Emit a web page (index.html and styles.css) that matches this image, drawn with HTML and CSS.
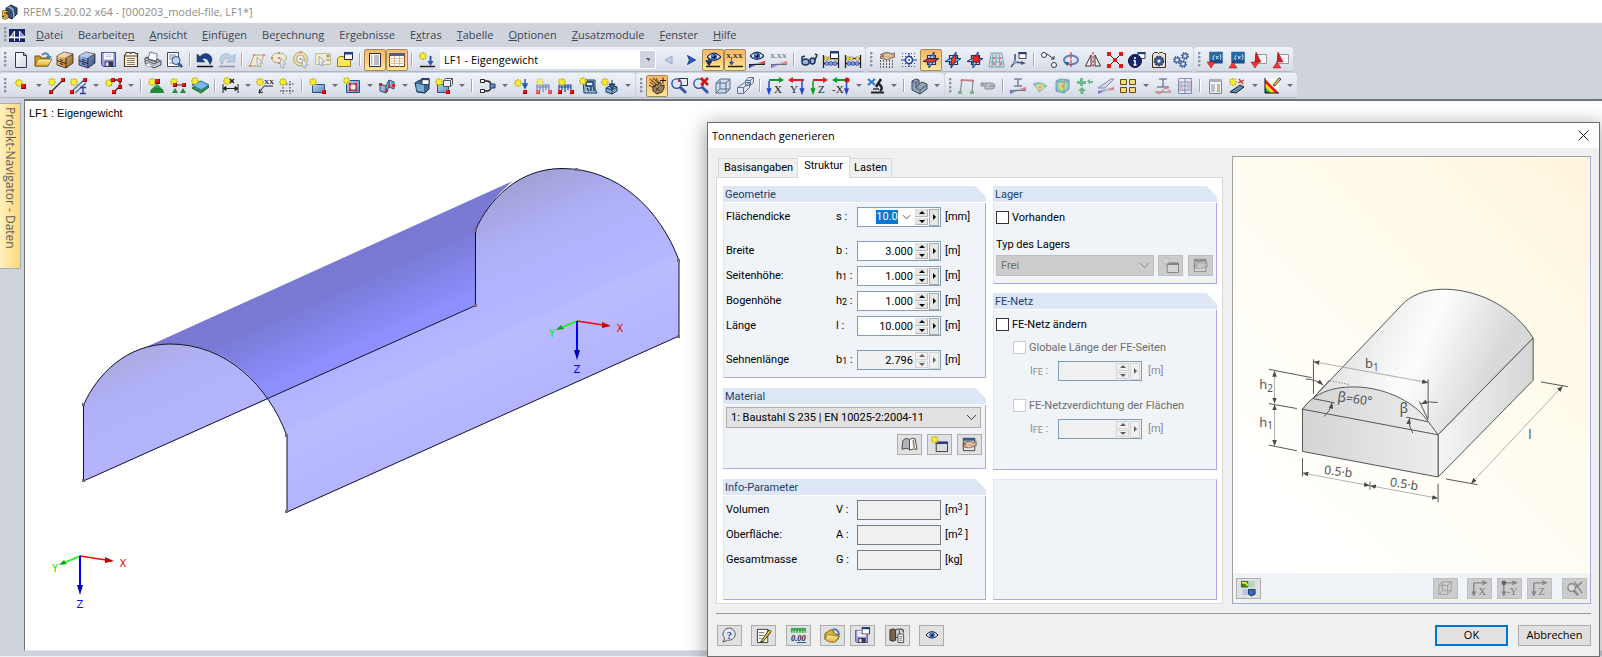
FILE: index.html
```html
<!DOCTYPE html>
<html lang="de">
<head>
<meta charset="utf-8">
<title>RFEM 5.20.02 x64 - [000203_model-file, LF1*]</title>
<link rel="stylesheet" href="styles.css">
</head>
<body>
<svg class="defs" aria-hidden="true">
  <defs>
    <linearGradient id="gBlue" x2="1" y2="1"><stop stop-color="#b9d3ee"/><stop offset="1" stop-color="#5c8cc0"/></linearGradient>
    <linearGradient id="gGold" x2="0" y2="1"><stop stop-color="#fff3a0"/><stop offset="1" stop-color="#e0ae2c"/></linearGradient>
    <linearGradient id="gWood" x2="1" y2="1"><stop stop-color="#f4c884"/><stop offset="1" stop-color="#b87828"/></linearGradient>
    <linearGradient id="gNavy" x2="1" y2="1"><stop stop-color="#9cbcf4"/><stop offset="1" stop-color="#3a64b8"/></linearGradient>
    <linearGradient id="gPaper" x2="1" y2="1"><stop stop-color="#fff"/><stop offset="1" stop-color="#d4d8e2"/></linearGradient>
    <linearGradient id="gGreen" x2="0" y2="1"><stop stop-color="#6fdc74"/><stop offset="1" stop-color="#14782a"/></linearGradient>
    <radialGradient id="gRain"><stop stop-color="#f33"/><stop offset=".35" stop-color="#fc3"/><stop offset=".65" stop-color="#5d5"/><stop offset="1" stop-color="#58c"/></radialGradient>
    <linearGradient id="gRB" x2="1" y2="0"><stop stop-color="#22c"/><stop offset=".5" stop-color="#aac"/><stop offset="1" stop-color="#e22"/></linearGradient>
  </defs>
  <symbol id="star" viewBox="0 0 10 10"><path d="M5 0v10M0 5h10M1.5 1.5l7 7M8.500 1.500l-7 7" stroke="#a59c1c" stroke-width="2"/><path d="M5 .5v9M.5 5h9M2 2l6 6M8 2l-6 6" stroke="#fff22a" stroke-width="1.400"/><circle cx="5" cy="5" r="2" fill="#fff22a"/></symbol>
  <symbol id="node" viewBox="0 0 4 4"><path d="M0 0h4v4H0z" fill="#8d0000"/><path d="M0 0h3v3H0z" fill="#f11"/></symbol>
  <symbol id="cab" viewBox="0 0 20 20"><path d="M2 6l7-4 9 2-7 4v10l-9-3z" stroke="#3c2c1c" stroke-width=".8"/><path d="M11 8l7-4v9l-7 5z" stroke="#3c2c1c" stroke-width=".8"/><path d="M2 6l7-4 9 2-7 4z" fill="#fff" fill-opacity=".45"/><path d="M11 8l7-4v9l-7 5z" fill="#000" fill-opacity=".2"/><path d="M2 10.500l9 3M5 9.500l3 1M5 13.500l3 1" stroke="#2c2014"/></symbol>
  <symbol id="eye" viewBox="0 0 16 10"><path d="M0 5Q8-4 16 5Q8 13 0 5z" fill="#e6f0ff" stroke="#14203c" stroke-width="1.300"/><circle cx="8" cy="5" r="3.600" fill="#2c66cc"/><circle cx="8" cy="5" r="1.700" fill="#001"/><circle cx="7" cy="3.800" r=".8" fill="#fff"/></symbol>
  <symbol id="abacus" viewBox="0 0 20 20"><path d="M2.500 5v13M17.500 5v13M2 8.500h16M2 13.500h16" stroke="#222" stroke-width="1.300"/><g fill="#f6df5e" stroke="#776a10" stroke-width=".5"><circle cx="5" cy="8.500" r="1.800"/><circle cx="8.500" cy="8.500" r="1.800"/><circle cx="14.500" cy="8.500" r="1.800"/></g><g fill="#7e9cf0" stroke="#203070" stroke-width=".6"><circle cx="6" cy="13.500" r="2"/><circle cx="10" cy="13.500" r="2"/><circle cx="14" cy="13.500" r="2"/></g></symbol>
  <symbol id="miniwin" viewBox="0 0 9 8"><path d="M.5.5h8v7h-8z" fill="#fff" stroke="#223"/><path d="M0 0h9v2.500H0z" fill="#24407c"/></symbol>
  <symbol id="disk" viewBox="0 0 16 16"><path d="M.5.5h15v15h-13l-2-2z" fill="#9c9ae0" stroke="#45458c"/><path d="M3 1h10v7H3z" fill="#fff"/><path d="M4 10h9v6H4z" fill="#333a4c"/><path d="M5 11h3v4H5z" fill="#ddd"/><path d="M4.500 3h7M4.500 5h7" stroke="#bbc"/></symbol>
  <symbol id="cube" viewBox="0 0 16 16"><path d="M1 5l4-4h10v10l-4 4H1zM1 5h10v10M11 5l4-4M5 1v10h10M5 11l-4 4" fill="#c8d4e6" fill-opacity=".7" stroke="#566c92"/></symbol>
  <symbol id="planes" viewBox="0 0 18 18"><path d="M5.500 4.500h8v9h-8z" fill="#c4e2fa" stroke="#0c3878" stroke-width="1.200"/><path d="M7 8l5-7v9l-5 7z" fill="#8ec4f0" fill-opacity=".6" stroke="#0c3878"/><path d="M1 10.500l5-3h11l-5 3.500z" fill="#a8d4f8" fill-opacity=".7" stroke="#0c3878"/></symbol>
  <symbol id="members" viewBox="0 0 18 18"><path d="M2 15V8h6v7M8 8h6v7M2 10h12M5 8v5M11 8v5" fill="none" stroke="#224a9c" stroke-width="1.200"/><use href="#node" x="1" y="13" width="4" height="4"/><use href="#node" x="13" y="13" width="4" height="4"/></symbol>
  <symbol id="lens" viewBox="0 0 18 18"><path d="M10 10l6 6" stroke="#3556a4" stroke-width="3" stroke-linecap="round"/><circle cx="7" cy="7" r="5" fill="#dbe8fb" stroke="#3b4c86" stroke-width="1.500"/></symbol>
  <symbol id="hand" viewBox="0 0 16 9"><path d="M0 3l4-2 5-.5 3 1.500 4-1v5l-4 1-2 1.500-3 .5-3-1-4-1 0-2 4-.5z" fill="#cbab8d" stroke="#60462f" stroke-width=".8"/><path d="M4 4.500l5-1.500 4 2M5 6.500l4 .5" fill="none" stroke="#fff0df" stroke-width=".8"/></symbol>
  <symbol id="fe" viewBox="0 0 18 18"><path d="M1 1h16v14H1z" fill="#164c88"/><path d="M1 1h16v6L1 12z" fill="#4086c0" fill-opacity=".5"/><path d="M7 5q-3 3-1 6M9 6l3 4M12 6l-3 4M14 4q2 3 0 7" stroke="#dff" fill="none"/></symbol>
  <symbol id="newwin" viewBox="0 0 18 18"><path d="M5.500 6.500h12v10h-12z" fill="#dcdcdc" stroke="#333"/><path d="M5 6h13v2.500H5z" fill="#24407c"/></symbol>
  <symbol id="props" viewBox="0 0 18 18"><path d="M2.500 2.500h12v13h-12z" fill="#e6e6e6" stroke="#444"/><path d="M2 2h13v3H2z" fill="#345a92"/><use href="#hand" x="1" y="5" width="16" height="8"/></symbol>
</svg>

<header class="titlebar">
  <svg class="app-icon" viewBox="0 0 16 16"><path d="M4 4l5-3 6 3v6l-5 5-5-2z" fill="#35506e" stroke="#142844"/><path d="M8 4q4 1 4 10M5 3q4-1 7 3" fill="none" stroke="#b5cbe2"/><text x="0" y="15" class="logo-five">5</text></svg>
  <span>RFEM 5.20.02 x64 - [000203_model-file, LF1*]</span>
</header>

<nav class="menubar" aria-label="Hauptmenü">
  <span class="grip"></span>
  <svg class="bridge" viewBox="0 0 16 13"><path d="M0 0h16v13H0z" fill="#16246a"/><path d="M0 8.500h16" stroke="#fff" stroke-width="1.500"/><path d="M5.500 2v10M10.500 2v10" stroke="#fff"/><path d="M5.500 2L1 8h4.500zM10.500 2v6H16z" fill="#fff" fill-opacity=".5" stroke="#fff" stroke-width=".7"/></svg>
  <button><u>D</u>atei</button><button>Bearbeite<u>n</u></button><button><u>A</u>nsicht</button><button><u>E</u>infügen</button><button>Be<u>r</u>echnung</button><button>Er<u>g</u>ebnisse</button><button>E<u>x</u>tras</button><button><u>T</u>abelle</button><button><u>O</u>ptionen</button><button><u>Z</u>usatzmodule</button><button><u>F</u>enster</button><button><u>H</u>ilfe</button>
</nav>

<div class="toolrow">
  <div class="toolbar" role="toolbar" aria-label="Standard">
    <span class="grip"></span>
    <button class="tb" aria-label="Neu"><svg><path d="M4.500 2.500h8l3 3v12h-11z" fill="url(#gPaper)" stroke="#333a4c"/><path d="M12.500 2.500v3h3" fill="none" stroke="#333a4c"/></svg></button>
    <button class="tb" aria-label="Öffnen"><svg><path d="M2 16V6h5l1 2h7v8z" fill="#d99c1c" stroke="#6e5010"/><path d="M2 16l3-7h14l-4 7z" fill="url(#gGold)" stroke="#6e5010" stroke-width=".7"/><path d="M9 5q4-4 7 1" fill="none" stroke="#4c86b8" stroke-width="2"/><path d="M13 6h6l-3 4z" fill="#4c86b8"/></svg></button>
    <button class="tb" aria-label="Projektmanager"><svg><use href="#cab" fill="url(#gWood)"/></svg></button>
    <button class="tb" aria-label="Modellverwaltung"><svg><use href="#cab" fill="url(#gNavy)"/></svg></button>
    <button class="tb" aria-label="Speichern"><svg><use href="#disk" x="2" y="2" width="15" height="15"/></svg></button>
    <button class="tb" aria-label="Ausdruckprotokoll"><svg><path d="M3.500 5.500l2-3h3l1 1 1-1h3l1 1h2v13h-13z" fill="#fff6e6" stroke="#4c3a22" stroke-width="1.200"/><path d="M4 6h12" stroke="#4c3a22"/><path d="M6 8.500h8M6 10.500h8M6 12.500h8M6 14.500h8" stroke="#8c7c60"/></svg></button>
    <button class="tb" aria-label="Drucken"><svg><path d="M5 9l2-7 7 2v7z" fill="#fff" stroke="#777"/><path d="M2 8l3-1 0 2 8 3 1-3 4 2v4l-7 3-9-5z" fill="#c4c8d4" stroke="#444a58"/><path d="M3 10l8 4 6-3" fill="none" stroke="#555"/><path d="M5 13l5 3-4 1-4-2z" fill="#fff" stroke="#777" stroke-width=".6"/></svg></button>
    <button class="tb" aria-label="Vorschau"><svg><path d="M2.500 2.500h11v14h-11z" fill="#fff" stroke="#444a58"/><path d="M4 5h7M4 7h5M4 9h3M4 13h4" stroke="#889"/><path d="M13 13l4 4" stroke="#345a9c" stroke-width="3"/><circle cx="11" cy="10.500" r="4" fill="#bdd6f2" stroke="#2c4c84"/></svg></button>
    <span class="sep"></span>
    <button class="tb" aria-label="Rückgängig"><svg><path d="M2 4v8h8L7 9Q12 6 15 14.500Q19.500 8 14 4.500Q9 2 5 6.500z" fill="#1d3f85" stroke="#0f2858" stroke-width=".5"/><path d="M2 16.500h16" stroke="#111" stroke-width="1.500"/></svg></button>
    <button class="tb dim" aria-label="Wiederherstellen"><svg><path d="M18 4v8h-8l3-3Q8 6 5 14.500Q.5 8 6 4.500Q11 2 15 6.500z" fill="#a8c0dc" stroke="#6c84a4" stroke-width=".7"/><path d="M2 16.500h16" stroke="#667" stroke-width="1.500"/></svg></button>
    <span class="sep"></span>
    <button class="tb dim" aria-label="Fläche wählen"><svg><path d="M3 16l4-11h10l-5 11z" fill="#fbf2ba" stroke="#8b6f3c"/><path d="M10 7l6 6-3 0 1 4-3-1-1-3z" fill="#eee" stroke="#888"/><path d="M6 4h2v2H6zM16 4h2v2h-2zM2 15h2v2H2z" fill="#e33"/></svg></button>
    <button class="tb dim" aria-label="Ellipse wählen"><svg><ellipse cx="10" cy="8" rx="7.500" ry="5" fill="#fbf2ba" stroke="#8b7a3c"/><path d="M12 8l5 6-3 0 1 4-3-1-1-3z" fill="#eee" stroke="#888"/><path d="M9 2h2v2H9zM2 7h2v2H2zM9 7h2v2H9zM9 12h2v2H9z" fill="#e33"/></svg></button>
    <button class="tb dim" aria-label="Ring wählen"><svg><circle cx="9.500" cy="9" r="7" fill="#f3e35a" stroke="#8b7a3c"/><circle cx="9.500" cy="9" r="4" fill="#eef" stroke="#8b7a3c"/><path d="M12 9l5 6-3 0 1 3-3-1-1-3z" fill="#eee" stroke="#888"/><path d="M8.500 8h2v2h-2zM8.500 1h2v2h-2z" fill="#e33"/></svg></button>
    <button class="tb dim" aria-label="Auswahl erweitern"><svg><path d="M2.500 3.500h15v11h-15z" fill="#fbf2ba" stroke="#b8a03c"/><path d="M6 6l6 6-3 0 1 4-3-1-1-3z" fill="#eee" stroke="#888"/><path d="M13 6h4M15 4v4M13 10h4" stroke="#444"/></svg></button>
    <button class="tb" aria-label="Auswahlfenster"><svg><path d="M2.500 8.500l2-2h4l1 2h6v8h-13z" fill="#fbe65c" stroke="#93801c"/><use href="#miniwin" x="9" y="2" width="9" height="8"/></svg></button>
    <span class="sep"></span>
    <button class="tb on" aria-label="Navigator"><svg><path d="M4.500 3.500h11v13h-11z" fill="#fff" stroke="#222c48"/><path d="M6 6h1.500M9 6h5M6 8h1.500M9 8h5M6 10h1.500M9 10h5M6 12h1.500M9 12h5M6 14h1.500M9 14h5" stroke="#556" stroke-width=".8"/></svg></button>
    <button class="tb on" aria-label="Tabellen"><svg><path d="M2.500 3.500h15v13h-15z" fill="#fff" stroke="#6c3d14"/><path d="M2 3h16v3H2z" fill="#46618c"/><path d="M2 8.500h16M2 11h16M2 13.500h16M7.500 6v11M12.500 6v11" stroke="#d8a878" stroke-width=".8"/></svg></button>
    <span class="sep"></span>
    <button class="tb" aria-label="Neuer Lastfall"><svg><use href="#star" x="2" y="2" width="8" height="8"/><path d="M13.500 6v7" stroke="#2858b0" stroke-width="2"/><path d="M10.500 11h6l-3 5z" fill="#2858b0"/><path d="M3 16.500h15" stroke="#222" stroke-width="1.500"/></svg></button>
    <select class="lf" aria-label="Lastfall"><option>LF1 - Eigengewicht</option></select>
    <button class="tb dim" aria-label="Vorheriger"><svg><path d="M13 6v8l-7-4z" fill="#b4c4ec" stroke="#6478ac"/></svg></button>
    <button class="tb" aria-label="Nächster"><svg><path d="M6.500 5.500l8 4.500-8 4.500 2-4.500z" fill="#2e62c0" stroke="#1c3e84"/></svg></button>
    <button class="tb on" aria-label="Lasten zeigen"><svg><path d="M6 5v8M6 15l-2.500-4h5z" stroke="#17356e" stroke-width="1.500" fill="#17356e"/><use href="#eye" x="4" y="2" width="14" height="10"/><path d="M3 16.500h14" stroke="#222" stroke-width="1.500"/></svg></button>
    <button class="tb on" aria-label="Werte zeigen"><svg><text x="1" y="8" class="glyph">X.XX</text><path d="M6.500 8v5M4.500 12l2 3 2-3z" stroke="#2858b0" fill="#2858b0"/><path d="M3 16.500h15" stroke="#222" stroke-width="1.500"/></svg></button>
    <button class="tb" aria-label="Ergebnisse zeigen"><svg><use href="#eye" x="3" y="1" width="14" height="10"/><path d="M2 18v-3l16-4v3l-8 1z" fill="url(#gRB)"/><path d="M2 14.500h16" stroke="#222"/></svg></button>
    <button class="tb dim" aria-label="Ergebniswerte"><svg><text x="1" y="8" class="glyph">X.XX</text><path d="M2 18v-3l16-4v3l-8 1z" fill="url(#gRB)"/><path d="M2 14.500h16" stroke="#222"/></svg></button>
    <span class="sep"></span>
    <button class="tb" aria-label="Ansicht"><svg><ellipse cx="6.500" cy="12" rx="3.500" ry="3" fill="#9ab4da" stroke="#21345c" stroke-width="1.500"/><ellipse cx="13.500" cy="11" rx="2.500" ry="3" fill="#9ab4da" stroke="#21345c" stroke-width="1.500"/><path d="M3 11L3 7l3-1M16 10l2-5-2-1" fill="none" stroke="#21345c" stroke-width="1.500"/></svg></button>
    <button class="tb" aria-label="Berechnen"><svg><use href="#abacus"/><use href="#miniwin" x="9" y="1" width="9" height="8"/></svg></button>
    <button class="tb" aria-label="Alles berechnen"><svg><use href="#abacus"/></svg></button>
  </div>
  <div class="toolbar" role="toolbar" aria-label="Arbeitsebene">
    <span class="grip"></span>
    <button class="tb" aria-label="Raster"><svg><path d="M3 11h14M3 14h14M3 17h14" stroke="#333" stroke-width="1.400" stroke-dasharray="1 2"/><use href="#hand" x="3" y="2" width="15" height="8"/></svg></button>
    <button class="tb" aria-label="Fang"><svg><path d="M3 3.500h14M3 6.500h14M3 13.500h14M3 16.500h14" stroke="#555" stroke-dasharray="1 2"/><path d="M10 3v14M2 10h16" stroke="#1f3f9c"/><circle cx="10" cy="10" r="3.500" fill="#fff" stroke="#1f3f9c" stroke-width="1.600"/><circle cx="10" cy="10" r="1" fill="#1f3f9c"/></svg></button>
    <button class="tb on" aria-label="Ebene XY"><svg><use href="#planes" x="1" y="1" width="18" height="18"/><path d="M3 11.500l4-2.500h9l-4 3z" fill="#f0402c" stroke="#7c1010" stroke-width=".7"/></svg></button>
    <button class="tb" aria-label="Ebene YZ"><svg><use href="#planes" x="1" y="1" width="18" height="18"/><path d="M8.500 9.500l4-5.500v6.500l-4 5.500z" fill="#f0402c" stroke="#7c1010" stroke-width=".7"/></svg></button>
    <button class="tb" aria-label="Ebene XZ"><svg><use href="#planes" x="1" y="1" width="18" height="18"/><path d="M8 6h6v6H8z" fill="#f22"  stroke="#7c1010" stroke-width=".7"/></svg></button>
    <button class="tb dim" aria-label="Netz"><svg><path d="M4 3h11l2 14H2zM9 3v14M3 8h13M3 12h14M6 3L5 17M12 3l1 14" fill="#bfe0ee" stroke="#466f86"/><path d="M6 7h2v2H6zM12 7h2v2h-2zM6 13h2v2H6zM13 13h2v2h-2z" fill="#e22"/></svg></button>
    <button class="tb" aria-label="Koordinatensystem"><svg><path d="M6 4v8l8 1M6 12l-4 5" fill="none" stroke="#45587c" stroke-width="1.600"/><circle cx="6" cy="12" r="2" fill="#8aa0c8"/><use href="#miniwin" x="9" y="2" width="9" height="7"/><path d="M12 11v4l5-2z" fill="#45587c"/></svg></button>
    <span class="sep"></span>
    <button class="tb" aria-label="Verschieben"><svg><circle cx="5" cy="5" r="2.500" fill="#fff" stroke="#333"/><circle cx="15" cy="15" r="2.500" fill="#fff" stroke="#333"/><circle cx="5" cy="10" r=".8"/><circle cx="8" cy="14" r=".8"/><path d="M8 4l7 5M15 9V6M15 9l-3 0" stroke="#333" fill="none"/></svg></button>
    <button class="tb" aria-label="Drehen"><svg><ellipse cx="10" cy="10" rx="7" ry="4.500" fill="none" stroke="#5c84b8" stroke-width="2"/><path d="M10 2v16" stroke="#e11" stroke-dasharray="3 1"/><path d="M6 16l-3-4 5 0z" fill="#365c94"/></svg></button>
    <button class="tb" aria-label="Spiegeln"><svg><path d="M8 5v11H2.500zM12 5v11h5.500z" fill="#eee" stroke="#333"/><path d="M10 2v16" stroke="#e11" stroke-dasharray="3 1"/></svg></button>
    <button class="tb" aria-label="Teilen"><svg><path d="M4 4l12 12M16 4L4 16" stroke="#222"/><path d="M2 2h4v4H2zM14 2h4v4h-4zM2 14h4v4H2zM14 14h4v4h-4z" fill="#e11"/><circle cx="10" cy="10" r="2" fill="#e11"/></svg></button>
    <button class="tb" aria-label="Info"><svg><use href="#miniwin" x="10" y="2" width="9" height="7"/><circle cx="8" cy="11" r="6.500" fill="#17246c" stroke="#0c1440"/><path d="M8 7v2M8 10v5M6.500 15h3M6.500 10.500H8" stroke="#fff" stroke-width="1.500"/></svg></button>
    <button class="tb" aria-label="Einstellungen"><svg><path d="M3.500 4.500l2-2h3l1 1 1-1h3l1 1h2v14h-13z" fill="#eae0cc" stroke="#3c3020"/><circle cx="10" cy="11" r="4.500" fill="#3e5a92" stroke="#22365f" stroke-dasharray="2 1" stroke-width="1.500"/><circle cx="10" cy="11" r="1.600" fill="#fff"/></svg></button>
    <button class="tb" aria-label="Optionen"><svg><g fill="#7f9cd0" stroke="#28447e" stroke-width="1.500" stroke-dasharray="1.500 .8"><circle cx="6" cy="10" r="3"/><circle cx="14" cy="6" r="3"/><circle cx="12" cy="14" r="3"/></g><g fill="#fff"><circle cx="6" cy="10" r="1"/><circle cx="14" cy="6" r="1"/><circle cx="12" cy="14" r="1"/></g></svg></button>
  </div>
  <div class="toolbar" role="toolbar" aria-label="Module">
    <span class="grip"></span>
    <button class="tb" aria-label="Modul 1"><svg><use href="#fe" x="3" y="1" width="16" height="15"/><path d="M2 12h8l-4 6z" fill="#f33" stroke="#7c1010" stroke-width=".5"/></svg></button>
    <button class="tb" aria-label="Modul 2"><svg><use href="#fe" x="3" y="1" width="16" height="15"/><path d="M2 18h8l-4-6z" fill="#f33" stroke="#7c1010" stroke-width=".5"/></svg></button>
    <button class="tb" aria-label="Modul 3"><svg><path d="M6.500 4.500h11v9h-11z" fill="#f4f4f8" stroke="#999"/><path d="M7 2l5 10H6z" fill="#d81c24" stroke="#7c1010" stroke-width=".5"/><path d="M2 12h8l-4 6z" fill="#f33" stroke="#7c1010" stroke-width=".5"/></svg></button>
    <button class="tb" aria-label="Modul 4"><svg><path d="M6.500 4.500h11v9h-11z" fill="#f4f4f8" stroke="#999"/><path d="M7 2l5 10H6z" fill="#d81c24" stroke="#7c1010" stroke-width=".5"/><path d="M2 18h8l-4-6z" fill="#f33" stroke="#7c1010" stroke-width=".5"/></svg></button>
  </div>
</div>

<div class="toolrow">
  <div class="toolbar" role="toolbar" aria-label="Einfügen">
    <span class="grip"></span>
    <button class="tb" aria-label="Knoten"><svg><use href="#star" x="4" y="3" width="8" height="8"/><use href="#node" x="10" y="8" width="5" height="5"/></svg></button><button class="cv" aria-label="Mehr"></button>
    <button class="tb" aria-label="Linie"><svg><path d="M5 16L17 4" stroke="#222" stroke-width="1.300"/><use href="#star" x="2" y="2" width="8" height="8"/><use href="#node" x="3" y="14" width="4" height="4"/><use href="#node" x="15" y="2" width="4" height="4"/></svg></button>
    <button class="tb" aria-label="Stab"><svg><path d="M4 15L16 4M7 17L18 7" stroke="#4d7898" stroke-width="1.500"/><use href="#star" x="2" y="2" width="8" height="8"/><use href="#node" x="15" y="2" width="4" height="4"/><use href="#node" x="2" y="14" width="4" height="4"/><path d="M12 11.500h6M15 11.500v6M12 17.500h6" stroke="#2a3f92" stroke-width="1.300"/></svg></button><button class="cv" aria-label="Mehr"></button>
    <button class="tb" aria-label="Polylinie"><svg><path d="M8 10V4h9v6l-6 6" fill="none" stroke="#222" stroke-width="1.300"/><use href="#star" x="2" y="3" width="8" height="8"/><use href="#node" x="8" y="2" width="4" height="4"/><use href="#node" x="15" y="2" width="4" height="4"/><use href="#node" x="15" y="9" width="4" height="4"/><use href="#node" x="9" y="14" width="4" height="4"/></svg></button><button class="cv" aria-label="Mehr"></button>
    <span class="sep"></span>
    <button class="tb" aria-label="Knotenlager"><svg><use href="#star" x="2" y="2" width="8" height="8"/><path d="M11 7l5 6H6z" fill="url(#gGreen)"/><path d="M5 13h12l1 4H4z" fill="#1f8c3c"/><use href="#node" x="9" y="3" width="5" height="5"/></svg></button>
    <button class="tb" aria-label="Linienlager"><svg><use href="#star" x="2" y="2" width="8" height="8"/><path d="M6 9h11" stroke="#222"/><use href="#node" x="5" y="7" width="4" height="4"/><use href="#node" x="14" y="7" width="4" height="4"/><path d="M7 12l3 5H4zM15 12l3 5h-6z" fill="#1f8c3c"/></svg></button>
    <button class="tb" aria-label="Flächenlager"><svg><path d="M2 12l9-5 8 4-8 6z" fill="#2e9c48" stroke="#145c24"/><path d="M2 9l9-4 8 4-8 5z" fill="#78b8ec" stroke="#2a68a4"/><use href="#star" x="1" y="1" width="8" height="8"/></svg></button>
    <span class="sep"></span>
    <button class="tb" aria-label="Bemaßung"><svg><path d="M3 8v9M18 8v9M3 12.500h15M3 12.500l3-2v4zM18 12.500l-3-2v4z" stroke="#222" fill="#222"/><use href="#star" x="3" y="1" width="8" height="8"/><path d="M10 3l4 4M14 3l-4 4" stroke="#222" stroke-width="1.500"/></svg></button><button class="cv" aria-label="Mehr"></button>
    <button class="tb" aria-label="Kommentar"><svg><use href="#star" x="1" y="2" width="8" height="8"/><path d="M4 17l5-7h9M4 17l1-4M4 17l4-1" stroke="#222" fill="none"/><text x="9" y="8" class="glyph">XX</text></svg></button>
    <button class="tb" aria-label="Hilfslinien"><svg><path d="M6 5v13M3 8h14M13 5v13M3 15h15" stroke="#333" stroke-dasharray="1.500 1.500"/><use href="#star" x="2" y="2" width="8" height="8"/></svg></button>
    <span class="sep"></span>
    <button class="tb" aria-label="Fläche"><svg><path d="M5.500 8.500h12v8h-12z" fill="url(#gBlue)" stroke="#2c4f7c"/><use href="#star" x="2" y="2" width="8" height="8"/><use href="#node" x="15" y="14" width="4" height="4"/></svg></button><button class="cv" aria-label="Mehr"></button>
    <button class="tb" aria-label="Öffnung"><svg><path d="M4.500 4.500h13v12h-13z" fill="url(#gBlue)" stroke="#2c4f7c"/><path d="M8 8h6v6H8z" fill="#f0f0f8" stroke="#b11"/><path d="M7 7h2v2H7zM13 7h2v2h-2zM7 13h2v2H7zM13 13h2v2h-2z" fill="#e11"/><use href="#star" x="1" y="1" width="7" height="7"/></svg></button><button class="cv" aria-label="Mehr"></button>
    <button class="tb" aria-label="Durchdringung"><svg><path d="M3 8l6 2 3-6 5 2v7l-5-2-3 6-6-2z" fill="url(#gBlue)" stroke="#2c4f7c"/><path d="M9 10v7M12 4v7" stroke="#2c4f7c"/><path d="M2 7h3v3H2zM15 8h3v3h-3zM8 13h3v3H8zM11 9h2v3h-2z" fill="#d22"/></svg></button><button class="cv" aria-label="Mehr"></button>
    <button class="tb" aria-label="Volumen"><svg><path d="M3 7l5-3h9v9l-4 4-8-1z" fill="#356a9c" stroke="#17304c"/><path d="M4 8l8 1v7l-7-1z" fill="#7eaad0"/><use href="#miniwin" x="9" y="2" width="9" height="7"/></svg></button>
    <button class="tb" aria-label="Volumenkörper"><svg><path d="M3.500 8.500h11v8h-11z" fill="url(#gBlue)" stroke="#2c4f7c"/><path d="M9.500 4.500l2-2h7v6l-2 2h-7zM9.500 4.500h7v6M16.500 4.500l2-2" fill="#f2f2f6" stroke="#555"/><use href="#star" x="1" y="2" width="8" height="8"/><use href="#node" x="12" y="14" width="4" height="4"/></svg></button><button class="cv" aria-label="Mehr"></button>
    <span class="sep"></span>
    <button class="tb" aria-label="Gelenk"><svg><path d="M3.500 3.500h4v3h-4zM3.500 13.500h4v3h-4z" fill="#fff" stroke="#222"/><path d="M7 5h3q3 0 4 3M7 15h3q3 0 4-3" fill="none" stroke="#222" stroke-width="1.300"/><path d="M13 8h5v4h-5z" fill="#5a90cc" stroke="#1c3c68"/></svg></button><button class="cv" aria-label="Mehr"></button>
    <button class="tb" aria-label="Knotenlast"><svg><use href="#star" x="2" y="3" width="8" height="8"/><path d="M13 3v6M11 8h4l-2 4z" stroke="#2858b0" stroke-width="1.500" fill="#2858b0"/><use href="#node" x="11" y="14" width="4" height="4"/></svg></button>
    <button class="tb dim" aria-label="Stablast"><svg><use href="#members" x="1" y="1" width="18" height="18"/><use href="#star" x="2" y="2" width="8" height="8"/></svg></button>
    <button class="tb" aria-label="Linienlast"><svg><use href="#members" x="1" y="1" width="18" height="18"/><use href="#star" x="2" y="2" width="8" height="8"/></svg></button>
    <button class="tb" aria-label="Flächenlast"><svg><path d="M5 4h12v9l2 4H6z" fill="#8fb8d8" stroke="#1f3f68"/><path d="M8 6h7v4H8zM9 12l2 3M13 11v4M16 11v4" fill="#e4eef8" stroke="#163054" stroke-width="1.300"/><use href="#star" x="1" y="1" width="8" height="8"/></svg></button>
    <button class="tb" aria-label="Freie Last"><svg><path d="M6 12l5-3 6 2v4l-5 3-6-2z" fill="#7fa8c8" stroke="#1c3c5c"/><path d="M6 12l6 2 5-3M12 14v4" fill="none" stroke="#1c3c5c"/><path d="M12 4v5M9 8h6l-3 5z" fill="#356a9c" stroke="#17304c"/><use href="#star" x="1" y="2" width="8" height="8"/></svg></button><button class="cv" aria-label="Mehr"></button>
  </div>
  <div class="toolbar" role="toolbar" aria-label="Ansicht">
    <span class="grip"></span>
    <button class="tb on" aria-label="Bewegen"><svg><path d="M3 3l7 6M3 6l5 4M6 2l5 5M2 9l5 3M9 2l3 5" stroke="#6b5330" stroke-width="1.200"/><path d="M6 10l2 1 1-3 2 1 1-3 2 1v3l3-1v3l-2 4-5 2-4-3z" fill="#9a8460" stroke="#382c14"/><path d="M9 12l4 3M12 11l-3 4" stroke="#382c14" stroke-width=".8"/><path d="M13 4.500h6M16 1.500v6" stroke="#222"/></svg></button>
    <button class="tb" aria-label="Zoom Fenster"><svg><path d="M9.500 2.500h9v7h-9z" fill="none" stroke="#333"/><use href="#lens" x="1" y="1" width="17" height="17"/><path d="M9 4h2v2H9z" fill="#d22"/></svg></button>
    <button class="tb" aria-label="Zoom Alles"><svg><use href="#lens" x="1" y="1" width="17" height="17"/><path d="M10 2l7 7M17 2l-7 7" stroke="#d61414" stroke-width="2.500"/></svg></button>
    <button class="tb" aria-label="Isometrie"><svg><use href="#cube" x="2" y="2" width="16" height="16"/></svg></button>
    <button class="tb" aria-label="Perspektive"><svg class="boxes"><path d="M10.500 4.500l3-3h5v5l-3 3h-5zM10.500 4.500h5v5M15.500 4.500l3-3M2.500 11.500l7-5h5v5l-6 6h-6zM2.500 11.500h6v6M8.500 11.500l6-5"/></svg></button>
    <span class="sep"></span>
    <button class="tb" aria-label="Ansicht X"><svg><path d="M4 4h13" stroke="#0b9c2c" stroke-width="2"/><path d="M14 1l5 3-5 3z" fill="#0b9c2c"/><path d="M4 5v9M2.500 13h3l-1.500 4z" stroke="#2448c8" stroke-width="1.500" fill="#2448c8"/><text x="9" y="17" class="axis">X</text></svg></button>
    <button class="tb" aria-label="Ansicht Y"><svg><path d="M4 4h13" stroke="#e01c24" stroke-width="2"/><path d="M6 1L1 4l5 3z" fill="#e01c24"/><path d="M15 5v9M13.500 13h3l-1.500 4z" stroke="#2448c8" stroke-width="1.500" fill="#2448c8"/><text x="3" y="17" class="axis">Y</text></svg></button>
    <button class="tb" aria-label="Ansicht Z"><svg><path d="M4 4h13" stroke="#e01c24" stroke-width="2"/><path d="M14 1l5 3-5 3z" fill="#e01c24"/><path d="M4 5v9M2.500 13h3l-1.500 4z" stroke="#0b9c2c" stroke-width="1.500" fill="#0b9c2c"/><text x="9" y="17" class="axis">Z</text></svg></button>
    <button class="tb" aria-label="Ansicht -X"><svg><path d="M4 4h12" stroke="#0b9c2c" stroke-width="2"/><path d="M6 1L1 4l5 3z" fill="#0b9c2c"/><circle cx="16" cy="4" r="2.500" fill="#d11"/><path d="M15.500 6v8M14 13h3l-1.500 4z" stroke="#2448c8" stroke-width="1.500" fill="#2448c8"/><text x="1" y="17" class="axis">-X</text></svg></button><button class="cv" aria-label="Mehr"></button>
    <button class="tb" aria-label="Sichtbarkeit"><svg><path d="M2 3l7 6M9 3L2 9" stroke="#2878c8" stroke-width="2"/><path d="M15 3l-5 8M13 8q5 4 1 7" stroke="#222" stroke-width="2.500" fill="none"/><path d="M5 16.500h13" stroke="#222" stroke-width="2"/><path d="M7 13h6" stroke="#333" stroke-width="1.500"/></svg></button><button class="cv" aria-label="Mehr"></button>
    <span class="sep"></span>
    <button class="tb" aria-label="Darstellung"><svg><path d="M3 5l4-2 3 1v4l3-2 5 2v5l-7 5-8-4z" fill="#8ea2b8" stroke="#39495c"/><path d="M3 5l4 2v5l4 2 7-5M7 7l3-3M11 14v4M10 8l-3 4" fill="none" stroke="#39495c" stroke-width=".8"/></svg></button><button class="cv" aria-label="Mehr"></button>
  </div>
  <div class="toolbar" role="toolbar" aria-label="Ergebnisse">
    <span class="grip"></span>
    <button class="tb dim" aria-label="Verformung"><svg><path d="M4 17L6 4l11 1-1 12" fill="none" stroke="#555" stroke-width="1.300"/><path d="M4 5l5-1 8 0" stroke="#c33" fill="none"/><path d="M2 15h4v3H2zM14 15h4v3h-4z" fill="#3a9c50"/><path d="M5 3h2v2H5zM16 4h2v2h-2z" fill="#d22"/></svg></button>
    <button class="tb dim" aria-label="Verbindung"><svg><path d="M3 7h10q4 0 4 3t-4 3H7v-3H3z" fill="#aaa" stroke="#555"/><path d="M5 7v3M8 7v3M11 10h5" stroke="#555"/></svg></button>
    <span class="sep"></span>
    <button class="tb dim" aria-label="Stabschnittgrößen"><svg><path d="M6 3h8M10 3v7M6 10h8" stroke="#333c6c" stroke-width="1.500"/><path d="M2 18v-3l16-4v3l-8 1z" fill="url(#gRB)"/><path d="M2 14.500h16" stroke="#333"/></svg></button>
    <button class="tb dim" aria-label="Flächenschnittgrößen"><svg><path d="M3 8q7-4 14 2l-8 6q-2-4-6-8z" fill="url(#gRain)" stroke="#568" stroke-width=".6"/></svg></button>
    <button class="tb dim" aria-label="Spannungen"><svg><path d="M4 5l4-2 9 1v9l-5 4-8-2z" fill="url(#gRain)" stroke="#2c6c8c"/><path d="M4 5l8 1v11M12 6l5-2" fill="none" stroke="#2c6c8c"/></svg></button>
    <button class="tb dim" aria-label="Lagerreaktionen"><svg><path d="M6 2h3v3h3v3H9v2H6V8H3V5h3zM13 5l3-2v2h3v2h-3v2zM8 11l4 4h-2.500v3h-3v-3H4z" fill="#2c9448"/></svg></button>
    <button class="tb dim" aria-label="Schnitt"><svg><path d="M2 12L15 3l3 0-9 9z" fill="#ccd4e4" stroke="#444c68"/><path d="M2 18v-3l16-4v3l-8 1z" fill="url(#gRB)"/></svg></button>
    <button class="tb" aria-label="Panel"><svg><path d="M2.500 3.500h6v5h-6zM11.500 3.500h6v5h-6zM2.500 11.500h6v5h-6zM11.500 11.500h6v5h-6z" fill="#f4dc7c" stroke="#5c4a10"/></svg></button><button class="cv" aria-label="Mehr"></button>
    <button class="tb dim" aria-label="Querschnitt"><svg><path d="M6 3h8M10 3v8M4 11h12" stroke="#333c6c" stroke-width="1.500"/><path d="M2 16h16" stroke="#333"/><path d="M3 16q4 4 6-1 4-6 9 1" fill="none" stroke="#d22"/></svg></button>
    <button class="tb dim" aria-label="Ergebnistabelle"><svg><path d="M3.500 2.500h13v15h-13zM10 2.500v15M3 6h14M3 10h14M3 14h14" fill="#e4ecf8" stroke="#445488"/><path d="M4 8h4M12 8h4M4 12h4M12 12h4" stroke="#b55"/></svg></button>
    <span class="sep"></span>
    <button class="tb dim" aria-label="Bericht"><svg><path d="M4.500 3.500h12v14h-12z" fill="#fff" stroke="#444"/><path d="M4 3h13v3H4z" fill="#889"/><path d="M6 9h4M6 11h4M6 13h4M6 15h4" stroke="#556"/><path d="M12 8h3v8h-3z" fill="url(#gRain)"/></svg></button>
    <button class="tb" aria-label="Neuer Schnitt"><svg><use href="#star" x="2" y="2" width="8" height="8"/><path d="M3 16l10-7 4 2-8 6z" fill="#5c88b4" stroke="#222"/><path d="M11 7l6-3M12 3l4 5" stroke="#c33" stroke-width="1.300"/></svg></button><button class="cv" aria-label="Mehr"></button>
    <button class="tb" aria-label="Farben"><svg><path d="M3 3h14v14H3z" fill="#fff"/><path d="M3 3l14 14h-4L3 7z" fill="#e11"/><path d="M3 7l10 10H9L3 11z" fill="#fd0"/><path d="M3 11l6 6H6l-3-3z" fill="#1a3"/><path d="M3 14l3 3H3z" fill="#22c"/><path d="M3 2v15h14" fill="none" stroke="#111"/><path d="M11 9l6-7 2 1-6 7z" fill="#efc84c" stroke="#222" stroke-width=".8"/></svg></button><button class="cv" aria-label="Mehr"></button>
  </div>
</div>

<main class="workspace">
  <aside class="dock"><button class="dock-tab">Projekt-Navigator - Daten</button></aside>
  <section class="viewport" aria-label="Modellansicht">
    <p class="case-name">LF1 : Eigengewicht</p>
    <svg class="model" role="img" aria-label="Tonnendach">
      <defs>
        <linearGradient id="mOut" gradientUnits="userSpaceOnUse" x1="513" y1="181" x2="599" y2="372"><stop stop-color="#a1a1d6"/><stop offset=".1" stop-color="#a6a6e2"/><stop offset=".28" stop-color="#b0b0fa"/><stop offset=".5" stop-color="#b3b3ff"/><stop offset=".62" stop-color="#b6b6ff"/><stop offset=".66" stop-color="#bbbbff"/><stop offset="1" stop-color="#b4b4ff"/></linearGradient>
        <linearGradient id="mFront" gradientUnits="userSpaceOnUse" x1="513" y1="181" x2="599" y2="372"><stop stop-color="#ababe2"/><stop offset=".18" stop-color="#b1b1fa"/><stop offset=".5" stop-color="#b5b5ff"/></linearGradient>
        <linearGradient id="mIn" gradientUnits="userSpaceOnUse" x1="513" y1="181" x2="599" y2="372"><stop stop-color="#7979d2"/><stop offset=".14" stop-color="#7a7ad6"/><stop offset=".42" stop-color="#8f8fff"/></linearGradient>
        <g id="axes">
          <path d="M0 0L26 4" stroke="#f00" stroke-width="1.500"/><path d="M25 1l9 4-9 2z" fill="#c00000"/>
          <path d="M0 0L-14 6" stroke="#0f0" stroke-width="1.500"/><path d="M-21 9l5-5 3 4z" fill="#00a800"/>
          <path d="M0 0V30" stroke="#00f" stroke-width="2"/><path d="M-3 29h6L0 39z" fill="#0000b4"/>
          <text x="43" y="11" fill="#e00000">X</text><text x="-25" y="16" fill="#00e800">Y</text><text x="0" y="52" fill="#0000ff">Z</text>
        </g>
      </defs>
      <g transform="translate(-25 -101)">
        <path fill="url(#mOut)" d="M679 260.500L679 336 287 512V436Q280 416 268 399L475.500 305.500V230C489 200 518 168.500 562 168.500C618 168.500 660 209.500 679 260.500Z"/>
        <path fill="url(#mIn)" d="M146 347L513 181Q489 200 475.500 230V305.500L268 399C247 367 213 344 170 344Q158 344 146 347Z"/>
        <path fill="url(#mFront)" d="M83.500 481V405C97 375 126 344 170 344C213 344 247 367 268 399Z"/>
        <g fill="none" stroke="#10102c" stroke-width="1">
          <path d="M83.500 481V405C97 375 126 344 170 344C226 344 268 385 287 436V512L679 336V260.500C660 209.500 618 168.500 562 168.500C518 168.500 489 200 475.500 230V305.500L83.500 481"/>
        </g>
        <g fill="#776a80"><path d="M82 403h3v3h-3zM82 479h3v3h-3zM285 434h3v3h-3zM285 510h3v3h-3zM474 229h3v3h-3zM474 304h3v3h-3zM677 259h3v3h-3zM677 335h3v3h-3zM575 168h3v3h-3z"/></g>
        <use href="#axes" x="577" y="321"/>
        <use href="#axes" x="80" y="556"/>
      </g>
    </svg>
  </section>
</main>
<footer class="statusbar"></footer>

<section class="dialog" role="dialog" aria-labelledby="dlg-title">
  <header class="dlg-title"><h1 id="dlg-title">Tonnendach generieren</h1><button class="close" aria-label="Schließen"><svg viewBox="0 0 11 11"><path d="M.5.500l10 10M10.500.500l-10 10" stroke="#222"/></svg></button></header>
  <div class="dlg-body">
    <div class="tabs-area">
      <div class="tabs" role="tablist"><button role="tab">Basisangaben</button><button role="tab" class="active" aria-selected="true">Struktur</button><button role="tab">Lasten</button></div>
      <div class="panel">
        <div class="col">
          <section class="group geo">
            <h2>Geometrie</h2>
            <div class="fields">
              <label for="f-s">Flächendicke</label><span>s :</span><span class="num"><input id="f-s" class="sel" value="10.0"><button class="drop" aria-label="Liste"><svg viewBox="0 0 10 6"><path d="M1 1l4 4 4-4" fill="none" stroke="#444"/></svg></button><span class="spin"><button aria-label="Mehr"></button><button aria-label="Weniger"></button></span><button class="next" aria-label="Weiter"></button></span><span>[mm]</span>
              <label for="f-b" class="gap">Breite</label><span class="gap">b :</span><span class="num gap"><input id="f-b" value="3.000"><span class="spin"><button aria-label="Mehr"></button><button aria-label="Weniger"></button></span><button class="next" aria-label="Weiter"></button></span><span class="gap">[m]</span>
              <label for="f-h1">Seitenhöhe:</label><span>h<small>1</small> :</span><span class="num"><input id="f-h1" value="1.000"><span class="spin"><button aria-label="Mehr"></button><button aria-label="Weniger"></button></span><button class="next" aria-label="Weiter"></button></span><span>[m]</span>
              <label for="f-h2">Bogenhöhe</label><span>h<small>2</small> :</span><span class="num"><input id="f-h2" value="1.000"><span class="spin"><button aria-label="Mehr"></button><button aria-label="Weniger"></button></span><button class="next" aria-label="Weiter"></button></span><span>[m]</span>
              <label for="f-l">Länge</label><span>l :</span><span class="num"><input id="f-l" value="10.000"><span class="spin"><button aria-label="Mehr"></button><button aria-label="Weniger"></button></span><button class="next" aria-label="Weiter"></button></span><span>[m]</span>
              <label for="f-b1" class="gap">Sehnenlänge</label><span class="gap">b<small>1</small> :</span><span class="num off gap"><input id="f-b1" value="2.796" readonly><span class="spin"><button disabled aria-label="Mehr"></button><button disabled aria-label="Weniger"></button></span><button class="next" disabled aria-label="Weiter"></button></span><span class="gap">[m]</span>
            </div>
          </section>
          <section class="group mat">
            <h2>Material</h2>
            <div class="mat-body">
              <select class="combo" aria-label="Material"><option>1: Baustahl S 235 | EN 10025-2:2004-11</option></select>
              <div class="btns">
                <button class="ib" aria-label="Bibliothek"><svg viewBox="0 0 18 18"><path d="M2 5l2-2q3-1 5 1v10q-3-2-8 0z" fill="#b4b4be" stroke="#4a4038"/><path d="M9 4q3-3 6-1l2 11q-4-1-8 1z" fill="#fafafa" stroke="#4a4038"/><path d="M13 4l1 9" stroke="#998" stroke-width="2"/></svg></button>
                <button class="ib" aria-label="Neues Material"><svg viewBox="0 0 18 18"><use href="#newwin"/><use href="#star" x="0" y="0" width="8" height="8"/></svg></button>
                <button class="ib" aria-label="Material bearbeiten"><svg viewBox="0 0 18 18"><use href="#props"/></svg></button>
              </div>
            </div>
          </section>
          <section class="group info">
            <h2>Info-Parameter</h2>
            <div class="fields">
              <label for="f-v">Volumen</label><span>V :</span><input id="f-v" class="ro" readonly><span>[m<sup>3</sup> ]</span>
              <label for="f-a">Oberfläche:</label><span>A :</span><input id="f-a" class="ro" readonly><span>[m<sup>2</sup> ]</span>
              <label for="f-g">Gesamtmasse</label><span>G :</span><input id="f-g" class="ro" readonly><span>[kg]</span>
            </div>
          </section>
        </div>
        <div class="col">
          <section class="group lager">
            <h2>Lager</h2>
            <div class="stack">
              <label class="check"><input type="checkbox">Vorhanden</label>
              <label class="typ" for="f-typ">Typ des Lagers</label>
              <div class="typ-row">
                <select id="f-typ" class="combo off" disabled><option>Frei</option></select>
                <button class="ib off" disabled aria-label="Neues Lager"><svg viewBox="0 0 18 18"><use href="#newwin"/><use href="#star" x="0" y="0" width="8" height="8"/></svg></button>
                <button class="ib off" disabled aria-label="Lager bearbeiten"><svg viewBox="0 0 18 18"><use href="#props"/></svg></button>
              </div>
            </div>
          </section>
          <section class="group netz">
            <h2>FE-Netz</h2>
            <div class="stack">
              <label class="check"><input type="checkbox">FE-Netz ändern</label>
              <div class="sub">
                <label class="check"><input type="checkbox" disabled>Globale Länge der FE-Seiten</label>
                <div class="ferow"><label for="f-fe1">l<small>FE</small> :</label><span class="num off"><input id="f-fe1" disabled><span class="spin"><button disabled aria-label="Mehr"></button><button disabled aria-label="Weniger"></button></span><button class="next" disabled aria-label="Weiter"></button></span><span>[m]</span></div>
                <label class="check second"><input type="checkbox" disabled>FE-Netzverdichtung der Flächen</label>
                <div class="ferow"><label for="f-fe2">l<small>FE</small> :</label><span class="num off"><input id="f-fe2" disabled><span class="spin"><button disabled aria-label="Mehr"></button><button disabled aria-label="Weniger"></button></span><button class="next" disabled aria-label="Weiter"></button></span><span>[m]</span></div>
              </div>
            </div>
          </section>
          <section class="group blank"></section>
        </div>
      </div>
    </div>
    <div class="preview">
      <svg class="sketch" viewBox="39 -339 1074 1248" role="img" aria-label="Systemskizze Tonnendach">
        <defs>
          <linearGradient id="sRoof" gradientUnits="userSpaceOnUse" x1="380" y1="180" x2="800" y2="360"><stop stop-color="#e2e4e3"/><stop offset=".5" stop-color="#fdfdfd"/><stop offset="1" stop-color="#d6d9d8"/></linearGradient>
          <linearGradient id="sFront" x2="1" y2="0"><stop stop-color="#d2d5d4"/><stop offset="1" stop-color="#eceeed"/></linearGradient>
          <linearGradient id="sSide" x2="1" y2="0"><stop stop-color="#f4f5f5"/><stop offset="1" stop-color="#d4d7d6"/></linearGradient>
          <marker id="arr" viewBox="0 0 18 14" refX="18" refY="7" markerWidth="18" markerHeight="14" orient="auto-start-reverse" markerUnits="userSpaceOnUse"><path d="M0 0L18 7 0 14z" fill="#4a4a4a"/></marker>
        </defs>
        <g stroke="#555" stroke-width="3" stroke-linejoin="round">
          <path fill="url(#sRoof)" d="M248 418L557 94C590 68 630 56 680 57C790 60 890 120 942 204L656 495Z"/>
          <path fill="url(#sSide)" d="M656 495L942 204V331L656 622Z"/>
          <path fill="url(#sFront)" d="M248 418Q262 398 282 383C320 358 360 350 410 351C500 354 575 395 612 437Q635 466 656 495V622L248 545Z"/>
          <path fill="none" d="M248 418L656 495M282 383L330 330M626 450L600 395"/>
        </g>
        <g stroke="#555" stroke-width="3" fill="none">
          <path d="M281 268V372M626 328V446M147 298L275 323M147 401L231 416M147 526L231 543M248 565V620M656 642V698M451 636V660M965 336L1046 350M680 628L774 645M280 386L345 399M560 442L626 456"/>
          <path d="M330 332L390 344" stroke-dasharray="3 6"/>
        </g>
        <g stroke="#8a8a8a" stroke-width="2" fill="none" marker-start="url(#arr)">
          <path marker-end="url(#arr)" d="M281 275L626 338"/><path marker-end="url(#arr)" d="M164 302V401"/><path marker-end="url(#arr)" d="M164 403V529"/><path marker-end="url(#arr)" d="M248 610L451 648"/><path marker-end="url(#arr)" d="M451 648L656 686"/><path marker-end="url(#arr)" d="M755 642L1031 348"/>
        </g>
        <g stroke="#555" stroke-width="3" fill="none">
          <path marker-end="url(#arr)" d="M258 327Q290 329 310 345"/><path marker-end="url(#arr)" d="M312 440Q332 424 337 398"/><path marker-end="url(#arr)" d="M655 398Q630 392 605 402"/><path marker-end="url(#arr)" d="M580 490Q566 470 570 445"/>
        </g>
        <g class="dims">
          <text x="436" y="294">b<tspan class="sub" dy="8">1</tspan></text>
          <text x="118" y="357">h<tspan class="sub" dy="8">2</tspan></text>
          <text x="118" y="471">h<tspan class="sub" dy="8">1</tspan></text>
          <text x="927" y="508">l</text>
          <text class="small" transform="rotate(7 352 394)" x="352" y="394"><tspan class="beta">β</tspan>=60°</text>
          <text class="beta" x="540" y="430">β</text>
          <text class="small" transform="rotate(7 312 613)" x="312" y="613">0.5·b</text>
          <text class="small" transform="rotate(9 510 649)" x="510" y="649">0.5·b</text>
        </g>
      </svg>
      <div class="pv-bar">
        <button class="ib" aria-label="Grafik"><svg viewBox="0 0 18 18"><path d="M1 1h8v7H1z" fill="#2c7c34"/><path d="M2 3h4l2 3" stroke="#fe0" stroke-width="2" fill="none"/><path d="M9 1h7v7H9z" fill="#b8d8b8"/><path d="M3 10h6v6H3z" fill="#b4c4dc"/><path d="M9 10l7 0v5l-4 2-3-2z" fill="#3a68b4" stroke="#163464"/></svg></button>
        <span class="fill"></span>
        <button class="ib off" disabled aria-label="Isometrie"><svg viewBox="0 0 18 18"><use href="#cube" x="1" y="1" width="15" height="15"/></svg></button>
        <button class="ib off first" disabled aria-label="Ansicht X"><svg viewBox="0 0 18 18"><path d="M3 3h12M3 3v13M1 12l2 4 2-4M12 1l4 2-4 2" stroke="#444" stroke-width="1.500" fill="none"/><text x="8" y="16" class="axis">X</text></svg></button>
        <button class="ib off" disabled aria-label="Ansicht -Y"><svg viewBox="0 0 18 18"><path d="M3 3h12M3 3v13M1 12l2 4 2-4M12 1l4 2-4 2" stroke="#444" stroke-width="1.500" fill="none"/><circle cx="3" cy="3" r="2.500"/><text x="6" y="16" class="axis">-Y</text></svg></button>
        <button class="ib off" disabled aria-label="Ansicht Z"><svg viewBox="0 0 18 18"><path d="M3 3h12M3 3v13M1 12l2 4 2-4M12 1l4 2-4 2" stroke="#444" stroke-width="1.500" fill="none"/><text x="8" y="16" class="axis">Z</text></svg></button>
        <button class="ib off last" disabled aria-label="Zoom zurücksetzen"><svg viewBox="0 0 18 18"><path d="M9 2l8 12M17 2L8 10" stroke="#444" stroke-width="1.500"/><path d="M8 11l5 5" stroke="#444" stroke-width="2.500"/><circle cx="6" cy="8" r="4" fill="#eee" stroke="#444" stroke-width="1.500"/></svg></button>
      </div>
    </div>
  </div>
  <footer class="dlg-foot">
    <button class="ib" aria-label="Hilfe"><svg viewBox="0 0 18 18"><path d="M9 1a7 6.500 0 1 1-2 13l-5 2 2-4A7 6.500 0 0 1 9 1z" fill="#e4e8f2" stroke="#555"/><text x="6" y="13" class="qm">?</text></svg></button>
    <button class="ib a" aria-label="Kommentar"><svg viewBox="0 0 18 18"><path d="M2.500 2.500h11v14h-11z" fill="#fff" stroke="#333"/><path d="M4 6h6M4 9h5M4 12h3" stroke="#667"/><path d="M7 14L15 3l2 2-8 10-3 1z" fill="#f0d030" stroke="#222"/></svg></button>
    <button class="ib b" aria-label="Einheiten"><svg viewBox="0 0 18 18"><path d="M1 1h16v5H1z" fill="#3faa4c"/><path d="M3 6V4M6 6V4M9 6V4M12 6V4M15 6V4" stroke="#bfe"/><text x="1" y="15" class="units">0.00</text><path d="M7 16.500h10" stroke="#224a9c"/></svg></button>
    <button class="ib a" aria-label="Laden"><svg viewBox="0 0 18 18"><path d="M1 13V7l6-4 3 1v2l6 3-1 4-5 3z" fill="#d8b43c" stroke="#6e5a14"/><path d="M1 13l3-5 12 2-4 6H6z" fill="url(#gGold)" stroke="#6e5a14" stroke-width=".7"/><path d="M9 2.500q6-1 7 6" stroke="#4c7cb8" stroke-width="2" fill="none"/></svg></button>
    <button class="ib c" aria-label="Speichern"><svg viewBox="0 0 18 18"><use href="#disk" x="1" y="3" width="14" height="14"/><use href="#miniwin" x="8" y="0" width="9" height="8"/></svg></button>
    <button class="ib b" aria-label="Kopieren"><svg viewBox="0 0 18 18"><path d="M1 3q3-2 6 0v11q-3 2-6 0z" fill="#7c6250" stroke="#3c2c20"/><path d="M7 3q3-2 4 0v8H7z" fill="#dcd4cc" stroke="#3c2c20"/><path d="M9.500 7.500h6v9h-6z" fill="#fff" stroke="#444"/><path d="M11 10h3M11 12h3M11 14h3" stroke="#667"/><path d="M11 2q5 0 4 4" fill="none" stroke="#444" stroke-width="1.500"/></svg></button>
    <button class="ib a" aria-label="Vorschau"><svg viewBox="0 0 18 18"><use href="#eye" x="3" y="4" width="13" height="9"/></svg></button>
    <span class="fill"></span>
    <button class="push default">OK</button>
    <button class="push">Abbrechen</button>
  </footer>
</section>
</body>
</html>
```
FILE: styles.css
```css
* { box-sizing: border-box; }
html, body { height: 100%; }
body {
  margin: 0;
  display: flex;
  flex-direction: column;
  position: relative;
  overflow: hidden;
  background: #ced3dc;
  color: #000;
  font: 11px/16px "Open Sans", "Noto Sans", sans-serif;
}
button, input, select { font: inherit; color: inherit; margin: 0; padding: 0; }
button { border: 0; background: none; flex: none; }
svg { display: block; flex: none; }
.defs { position: absolute; width: 0; height: 0; }

.titlebar { display: flex; align-items: center; gap: 5px; height: 23px; padding: 0 2px; background: #fff; color: #8c8c8c; flex: none; }
.app-icon { width: 16px; height: 16px; }
.logo-five { font: bold 11px "Liberation Sans", sans-serif; fill: #ffc20e; stroke: #222; stroke-width: 1px; paint-order: stroke; }

.menubar { display: flex; align-items: center; height: 24px; flex: none; }
.menubar button { padding: 0 8px 0 7px; color: #3f4654; height: 22px; }
.menubar .grip { margin-right: 2px; }
.bridge { width: 16px; height: 13px; margin-right: 4px; }
.grip { width: 3px; height: 16px; margin: 0 3px 0 4px; flex: none; background: radial-gradient(circle at 1px 1px, #8d93a0 1px, transparent 2px) 0 0 / 3px 4px; }

.toolrow { display: flex; height: 26px; flex: none; gap: 1px; }
.toolbar { display: flex; align-items: center; height: 25px; padding: 1px 1px 0 0; border-bottom: 1px solid #b2b6c2; border-radius: 3px; background: linear-gradient(#eef2fa, #e3e7f0 50%, #d6dae4); }
.tb { width: 22px; height: 22px; display: flex; align-items: center; justify-content: center; }
.tb svg { width: 20px; height: 20px; fill: none; }
.tb.on { border: 1px solid #a08c5c; border-radius: 2px; background: linear-gradient(#fbb765, #fdc97a 50%, #ffe89a); }
.tb.dim svg { opacity: .6; }
.tb .boxes { fill: #dbe2f0; stroke: #63769c; }
.sep { width: 1px; height: 13px; margin: 0 4px 0 3px; background: #a2a7b4; box-shadow: 1px 0 #fff; flex: none; }
.cv { width: 13px; height: 22px; display: flex; align-items: center; justify-content: center; }
.cv::before { content: ""; border: 3px solid transparent; border-top-color: #6b6f7a; border-bottom: 0; }
.lf { width: 216px; height: 19px; margin: 0 2px; padding: 0 3px; border: 1px solid #fff; border-radius: 0; appearance: none; background: linear-gradient(#fff, #fff) 0 0 / calc(100% - 15px) 100% no-repeat, conic-gradient(from 315deg at 50% 100%, #606678 90deg, transparent 0) right 4px top 7px / 6px 3px no-repeat, #cfd3df; }
.glyph { font: bold 7px "Liberation Serif", serif; fill: #222; }
.axis { font: 11px "Liberation Serif", serif; fill: #222; stroke: none; }

.workspace { flex: 1; display: flex; min-height: 0; padding: 0; }
.dock { width: 24px; flex: none; padding-top: 4px; }
.dock-tab { writing-mode: vertical-rl; width: 21px; height: 166px; padding: 3px 0; text-align: left; border: 1px solid #a6abc0; border-left: 0; background: linear-gradient(90deg, #fff0bc, #ffe49a 50%, #ffd978); color: #5c5c60; font-size: 12px; line-height: 18px; }
.viewport { position: relative; flex: 1; border: 1px solid #707378; border-width: 2px 0 1px 1px; border-bottom-color: #e4e6ea; background: #fff; overflow: hidden; }
.case-name { position: absolute; top: 4px; left: 4px; margin: 0; font: 11px/16px "Liberation Sans", sans-serif; }
.model { width: 100%; height: 100%; }
.model text { font: 10px "DejaVu Sans", sans-serif; text-anchor: middle; }
.statusbar { height: 6px; flex: none; border-bottom: 1px solid #eef1f6; }

.dialog { position: absolute; top: 122px; right: 2px; width: 893px; max-width: 100%; border: 1px solid #6e6e6e; background: #f0f0f0; box-shadow: 0 4px 18px 2px rgba(0, 0, 0, .35); font-family: Roboto, "Liberation Sans", sans-serif; font-size: 11px; line-height: 14px; }
.dlg-title { display: flex; align-items: center; justify-content: space-between; height: 25px; padding: 0 10px 0 4px; background: #fff; }
.dlg-title h1 { margin: 0; font: 11px/16px "Open Sans", "Noto Sans", sans-serif; }
.close svg { width: 11px; height: 11px; }
.dlg-body { display: flex; gap: 9px; margin: 8px 8px 0 8px; padding-bottom: 9px; border-bottom: 1px solid #999; }
.tabs-area { flex: none; width: 507px; display: flex; flex-direction: column; }
.tabs { display: flex; align-items: flex-end; height: 21px; padding-left: 2px; }
.tabs button { height: 19px; padding: 0 4px 0 5px; border: 1px solid #d9d9d9; border-bottom: 0; background: #f0f0f0; }
.tabs button + button { border-left: 0; padding: 0 4px; }
.tabs button.active { height: 22px; padding: 0 6px 3px; background: #fff; margin-bottom: -1px; z-index: 1; }
.panel { flex: 1; display: flex; gap: 7px; padding: 8px 4px 3px 6px; border: 1px solid #d9d9d9; background: #fff; }
.col { display: flex; flex-direction: column; width: 263px; flex: none; }
.col + .col { width: 224px; }
.group { border: 1px solid #dce6f4; border-right-color: #a9a9ea; border-bottom-color: #a9a9ea; background: #f0f4f9; display: flex; flex-direction: column; }
.group h2 { margin: -1px -1px 0; height: 17px; padding-left: 2px; border-bottom: 1px solid #fff; background: linear-gradient(225deg, #fff 7px, #dce6f4 8px); color: #1f3f6e; font-size: 11px; line-height: 17px; font-weight: 400; }
.geo { height: 192px; margin-bottom: 10px; }
.mat { height: 81px; margin-bottom: 10px; }
.info { height: 121px; }
.lager { height: 98px; margin-bottom: 9px; }
.netz { height: 177px; margin-bottom: 9px; }
.blank { height: 121px; }
.fields { display: grid; grid-template-columns: 110px 21px 84px 1fr; row-gap: 5px; align-items: center; padding: 4px 0 0 2px; }
.fields > :nth-child(4n) { padding-left: 4px; }
.gap { margin-top: 9px; }
small { font-size: 9px; vertical-align: -1px; }
sup { font-size: 9px; line-height: 0; vertical-align: 3px; }
.num { display: flex; align-items: center; width: 84px; height: 20px; padding: 1px; border: 1px solid #7f9db9; background: #fff; }
.num input { flex: 1; min-width: 0; width: 0; height: 16px; border: 0; background: transparent; text-align: right; padding-right: 2px; }
.num .sel { flex: none; width: 22px; margin-left: 17px; padding: 0; height: 14px; background: #0078d7; color: #fff; text-align: center; }
.drop { flex: 1; display: flex; justify-content: center; }
.drop svg { width: 9px; height: 6px; }
.spin { display: flex; flex-direction: column; gap: 1px; width: 13px; height: 16px; }
.spin button { flex: 1; display: flex; align-items: center; justify-content: center; border: 1px solid #b4b4b4; border-top-color: #e0e0e0; border-left-color: #e0e0e0; background: #e6e6e6; }
.spin button::before { content: ""; border: 3px solid transparent; border-top: 0; border-bottom-color: #000; }
.spin button + button::before { border-top: 3px solid #000; border-bottom: 0; }
.next { width: 10px; height: 17px; margin-left: 1px; display: flex; align-items: center; justify-content: center; border: 1px solid #a8a8a8; background: #e6e6e6; }
.next::before { content: ""; border: 3px solid transparent; border-left-color: #000; border-right: 0; }
.num.off { background: #f0f0f0; }
.num.off button { background: #f0f0f0; border-color: #d4d4d4; }
.num.off .spin button::before { border-bottom-color: #606060; }
.num.off .spin button + button::before { border-bottom-color: transparent; border-top-color: #606060; }
.num.off .next::before { border-left-color: #606060; }
.ro { width: 84px; height: 20px; border: 1px solid #7a7a7a; background: #f0f0f0; }

.combo { appearance: none; display: block; width: 255px; height: 21px; padding: 0 4px; border: 1px solid #adadad; border-radius: 0; background: linear-gradient(-45deg, transparent 43%, #444 43% 57%, transparent 57%) right 4px center / 5px 5px no-repeat, linear-gradient(45deg, transparent 43%, #444 43% 57%, transparent 57%) right 8px center / 5px 5px no-repeat, #e1e1e1; }
.combo.off { width: 159px; margin-right: -1px; color: #6d6d6d; border-color: #bfbfbf; opacity: 1; background: linear-gradient(-45deg, transparent 43%, #888 43% 57%, transparent 57%) right 4px center / 5px 5px no-repeat, linear-gradient(45deg, transparent 43%, #888 43% 57%, transparent 57%) right 8px center / 5px 5px no-repeat, #ccc; }
.mat-body { padding: 2px 3px 0 2px; }
.btns { display: flex; justify-content: flex-end; gap: 5px; margin-top: 6px; }
.ib { width: 25px; height: 21px; display: flex; align-items: center; justify-content: center; border: 1px solid #adadad; background: #e1e1e1; }
.ib svg { width: 17px; height: 17px; }
.ib.off { background: #ccc; border-color: #bfbfbf; }
.ib.off svg { filter: grayscale(1); opacity: .5; }
.stack { padding: 8px 3px 0 2px; }
.check { display: flex; align-items: center; gap: 3px; height: 13px; }
.check input { appearance: none; flex: none; width: 13px; height: 13px; border: 1px solid #333; background: #fff; }
.check input:disabled { border-color: #ccc; }
.sub { padding: 10px 0 0 17px; color: #6d6d6d; }
.typ { display: block; margin: 14px 0 3px; }
.typ-row { display: flex; gap: 5px; }
.ferow { display: flex; align-items: center; gap: 6px; padding: 7px 0 0 17px; color: #8c8c8c; }
.ferow label { width: 22px; }
.second { margin-top: 18px; }

.preview { flex: 1; min-width: 0; display: flex; flex-direction: column; border: 1px solid #a0a0a0; border-right-color: #a9a9ea; border-bottom-color: #a9a9ea; background: #f0f4f9; }
.sketch { flex: 1; width: 100%; min-height: 0; background: linear-gradient(45deg, #fff 10%, #fffdf2 50%, #fff5dd); }
.dims { font: 39px "Noto Sans", sans-serif; fill: #555; }
.dims .small { font-size: 37px; }
.dims .sub { font-size: 30px; }
.dims .beta { font-size: 42px; }
.pv-bar { display: flex; gap: 5px; height: 30px; padding: 5px 3px 0; }
.fill { flex: 1; }
.ib.first { margin-left: 4px; }
.ib.last { margin-left: 5px; }

.dlg-foot { display: flex; align-items: center; height: 42px; padding: 0 8px 0 9px; }
.dlg-foot .a { margin-left: 9px; }
.dlg-foot .b { margin-left: 10px; }
.dlg-foot .c { margin-left: 5px; }
.qm { font: bold 11px "Liberation Serif", serif; fill: #24408c; }
.units { font: italic bold 9px "Liberation Serif", serif; fill: #224; }
.push { width: 73px; height: 21px; border: 1px solid #adadad; background: #e1e1e1; font: 11px/16px "Open Sans", "Noto Sans", sans-serif; margin-left: 10px; }
.push.default { border: 2px solid #0078d7; }
```
